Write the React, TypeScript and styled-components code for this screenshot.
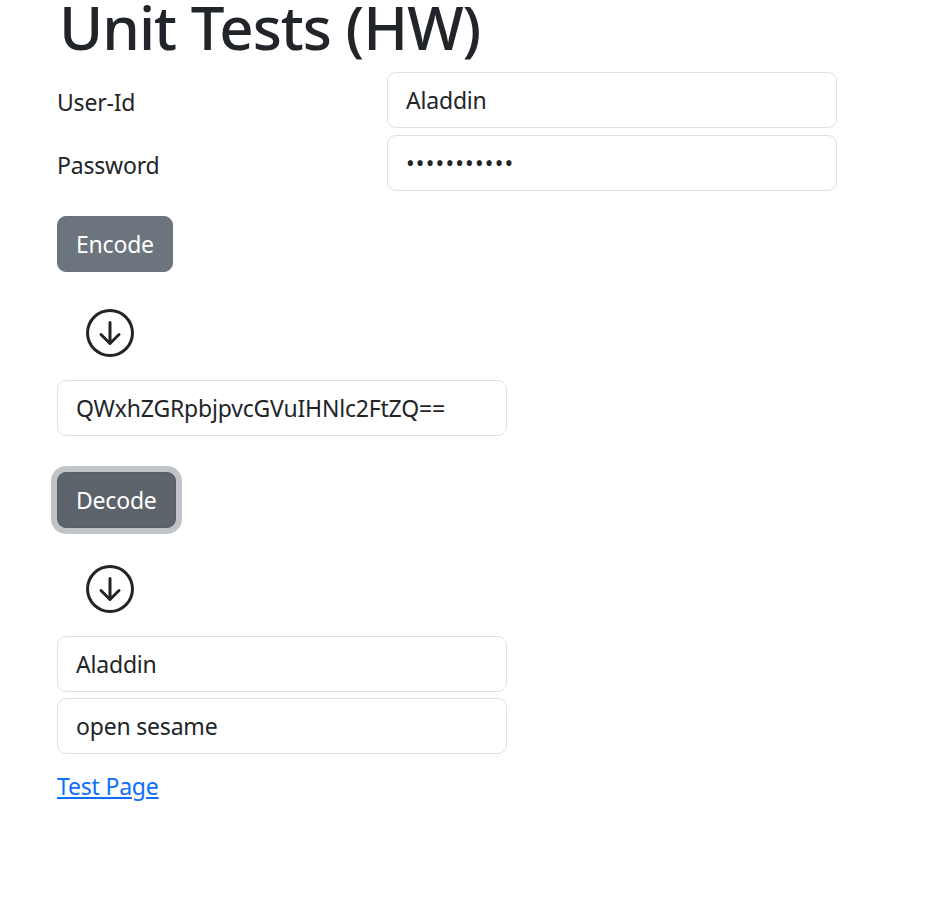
import React from "react";
import styled, { createGlobalStyle, css } from "styled-components";

const Global = createGlobalStyle`
  html, body { margin: 0; padding: 0; background: #fff; }
  body {
    font-family: "Noto Sans", "Open Sans", sans-serif;
    color: #212529;
    font-size: 23px;
  }
  * { box-sizing: border-box; }
`;

const Page = styled.main`
  display: flex;
  flex-direction: column;
  align-items: flex-start;
  padding: 0 0 0 57px;
`;

const Title = styled.h1`
  margin: 0 0 18px 2px;
  font-size: 60px;
  line-height: 54px;
  font-weight: 500;
  letter-spacing: -1px;
  color: #212529;
`;

const FieldRow = styled.div<{ $gap?: number }>`
  display: grid;
  grid-template-columns: 330px 450px;
  align-items: center;
  margin-bottom: ${(p) => p.$gap ?? 0}px;
`;

const Label = styled.label`
  padding-top: 3px;
  font-size: 23px;
  line-height: 36px;
  letter-spacing: -0.2px;
  color: #212529;
`;

const Input = styled.input<{ $gap?: number; $spacing?: number }>`
  display: block;
  width: 450px;
  height: 56px;
  margin: 0 0 ${(p) => p.$gap ?? 0}px 0;
  padding: 0 18px;
  border: 1px solid #dee2e6;
  border-radius: 9px;
  background: #fff;
  font-family: "Noto Sans", "Open Sans", sans-serif;
  font-size: 23px;
  letter-spacing: ${(p) => p.$spacing ?? -0.2}px;
  color: #212529;
  outline: none;
`;

const Button = styled.button<{ $focused?: boolean; $gap?: number }>`
  height: 56px;
  padding: 0 18px;
  margin: 0 0 ${(p) => p.$gap ?? 0}px 0;
  border: 1px solid #6c757d;
  border-radius: 9px;
  background: #6c757d;
  color: #fff;
  font-family: "Noto Sans", "Open Sans", sans-serif;
  font-size: 23px;
  letter-spacing: -0.2px;
  cursor: pointer;
  ${(p) =>
    p.$focused &&
    css`
      background: #5c636a;
      border-color: #565e64;
      box-shadow: 0 0 0 6px rgba(130, 138, 145, 0.5);
    `}
`;

const ArrowWrap = styled.div<{ $gap?: number }>`
  display: flex;
  width: 48px;
  height: 48px;
  margin: 0 0 ${(p) => p.$gap ?? 0}px 29px;
  color: #212529;
`;

const TestLink = styled.a`
  margin-top: 14px;
  font-size: 23px;
  line-height: 36px;
  letter-spacing: -0.2px;
  color: #0d6efd;
  text-decoration: underline;
`;

const ArrowDownCircle = () => (
  <svg width="48" height="48" viewBox="0 0 16 16" fill="currentColor">
    <path
      fillRule="evenodd"
      d="M1 8a7 7 0 1 0 14 0A7 7 0 0 0 1 8m15 0A8 8 0 1 1 0 8a8 8 0 0 1 16 0M8.5 4.5a.5.5 0 0 0-1 0v5.793L5.354 8.146a.5.5 0 1 0-.708.708l3 3a.5.5 0 0 0 .708 0l3-3a.5.5 0 0 0-.708-.708L8.5 10.293z"
    />
  </svg>
);

export default function App() {
  return (
    <>
      <Global />
      <Page>
        <Title>Unit Tests (HW)</Title>
        <FieldRow $gap={7}>
          <Label htmlFor="uid">User-Id</Label>
          <Input id="uid" readOnly value="Aladdin" />
        </FieldRow>
        <FieldRow $gap={25}>
          <Label htmlFor="pwd">Password</Label>
          <Input id="pwd" type="password" readOnly value="open sesame" $spacing={1.2} />
        </FieldRow>
        <Button $gap={37}>Encode</Button>
        <ArrowWrap $gap={23}>
          <ArrowDownCircle />
        </ArrowWrap>
        <Input readOnly value="QWxhZGRpbjpvcGVuIHNlc2FtZQ==" $gap={36} />
        <Button $focused $gap={37}>Decode</Button>
        <ArrowWrap $gap={23}>
          <ArrowDownCircle />
        </ArrowWrap>
        <Input readOnly value="Aladdin" $gap={6} />
        <Input readOnly value="open sesame" />
        <TestLink href="#">Test Page</TestLink>
      </Page>
    </>
  );
}
